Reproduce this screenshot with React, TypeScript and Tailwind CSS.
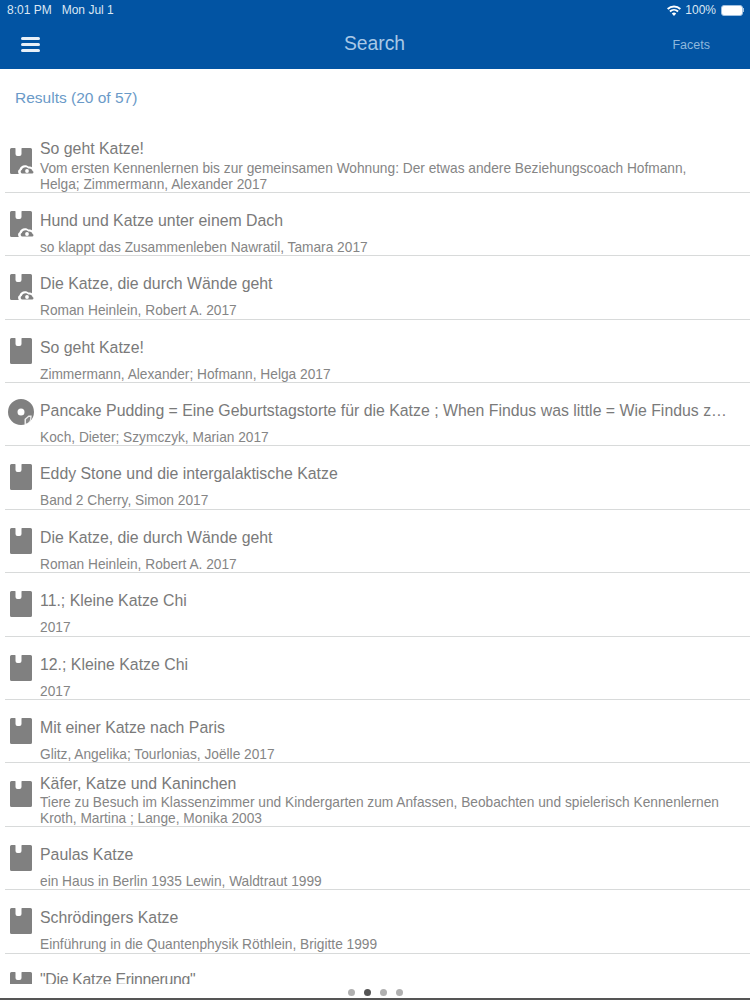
const rows: { t: string; s: string[]; icon: "cloud" | "book" | "disc" | "plain"; two?: "first" | "late" }[] = [
  { t: "So geht Katze!", s: ["Vom ersten Kennenlernen bis zur gemeinsamen Wohnung: Der etwas andere Beziehungscoach Hofmann,", "Helga; Zimmermann, Alexander 2017"], icon: "cloud", two: "first" },
  { t: "Hund und Katze unter einem Dach", s: ["so klappt das Zusammenleben Nawratil, Tamara 2017"], icon: "cloud" },
  { t: "Die Katze, die durch Wände geht", s: ["Roman Heinlein, Robert A. 2017"], icon: "cloud" },
  { t: "So geht Katze!", s: ["Zimmermann, Alexander; Hofmann, Helga 2017"], icon: "book" },
  { t: "Pancake Pudding = Eine Geburtstagstorte für die Katze ; When Findus was little = Wie Findus zu Pettersson kam", s: ["Koch, Dieter; Szymczyk, Marian 2017"], icon: "disc" },
  { t: "Eddy Stone und die intergalaktische Katze", s: ["Band 2 Cherry, Simon 2017"], icon: "book" },
  { t: "Die Katze, die durch Wände geht", s: ["Roman Heinlein, Robert A. 2017"], icon: "book" },
  { t: "11.; Kleine Katze Chi", s: ["2017"], icon: "book" },
  { t: "12.; Kleine Katze Chi", s: ["2017"], icon: "book" },
  { t: "Mit einer Katze nach Paris", s: ["Glitz, Angelika; Tourlonias, Joëlle 2017"], icon: "book" },
  { t: "Käfer, Katze und Kaninchen", s: ["Tiere zu Besuch im Klassenzimmer und Kindergarten zum Anfassen, Beobachten und spielerisch Kennenlernen", "Kroth, Martina ; Lange, Monika 2003"], icon: "book", two: "late" },
  { t: "Paulas Katze", s: ["ein Haus in Berlin 1935 Lewin, Waldtraut 1999"], icon: "book" },
  { t: "Schrödingers Katze", s: ["Einführung in die Quantenphysik Röthlein, Brigitte 1999"], icon: "book" },
];

function Icon({ kind }: { kind: string }) {
  if (kind === "disc") {
    return (
      <svg width="28" height="28" viewBox="0 0 28 28" className="-ml-[1px] -mt-[1px] block">
        <path fill="#808080" fillRule="evenodd" d="M13 0a13 13 0 1 0 0 26 13 13 0 0 0 0-26Zm0 9.500a3.500 3.500 0 1 1 0 7 3.500 3.500 0 0 1 0-7Z" />
        <path fill="#fff" opacity="0.85" d="M16.500 25.500V20l4-3.500h3.200l-.2 2.500-.8 3-2.500 2.500-2.500 1.500Z" />
        <path fill="#8a8a8a" d="M18 24.500V20.500l2.800-2.500h1.400v2l-.6 2-2 2Z" />
      </svg>
    );
  }
  return (
    <svg width="26" height="28" viewBox="0 0 26 28" className="block">
      <path fill="#808080" d="M2.500 1H6a.5.5 0 0 1 .5.5V7Q6.500 9 8.500 9h2q2 0 2-2V1.500A.5.5 0 0 1 13 1h8.500A1.500 1.500 0 0 1 23 2.500v23a1.500 1.500 0 0 1-1.500 1.500h-19A1.500 1.500 0 0 1 1 25.500v-23A1.500 1.500 0 0 1 2.500 1Z" />
      {kind === "cloud" && (
        <>
          <path fill="#fff" d="M12 27.800c-3 0-4-4.200-1.500-5.600.5-3.600 6-5.600 9-2.600 2.500-.6 4.800.8 5.200 3 1.800.8 1.300 5.200-1 5.200Z" />
          <path fill="#808080" d="M13.500 26.500c-2 0-2.500-2.800-.7-3.500.4-2.700 4.500-4 6.500-1.500 2-.5 4 .6 4.200 2.500 1.400.3 1.300 2.500-.3 2.500Z" />
          <circle cx="18" cy="24" r="1.900" fill="#fff" />
        </>
      )}
    </svg>
  );
}

function Row({ r }: { r: (typeof rows)[number] }) {
  return (
    <div className="relative flex h-[63.4px] shrink-0 pl-[9px] pr-[20px]">
      <div className="w-[31px] shrink-0 pt-[17px]">
        <Icon kind={r.icon} />
      </div>
      {r.two ? (
        <div className={r.two === "first" ? "min-w-0 flex-1 pt-[9px]" : "min-w-0 flex-1 pt-[11px]"}>
          <div className="truncate text-[15.850px] leading-[20px] text-[#7a7a7a]">{r.t}</div>
          <div className={r.two === "first" ? "mt-[1px] whitespace-nowrap text-[13.730px] leading-[17px] text-[#858585]" : "whitespace-nowrap text-[13.730px] leading-[17px] text-[#858585]"}>{r.s[0]}</div>
          <div className="whitespace-nowrap text-[13.730px] leading-[16px] text-[#858585]">{r.s[1]}</div>
        </div>
      ) : (
        <div className="min-w-0 flex-1 pt-[18px]">
          <div className="truncate text-[15.850px] leading-[20px] text-[#7a7a7a]">{r.t}</div>
          <div className="mt-[9px] whitespace-nowrap text-[13.730px] leading-[16.500px] text-[#858585]">{r.s[0]}</div>
        </div>
      )}
      <div className="absolute bottom-0 left-[5px] right-0 h-px bg-[#d8dada]" />
    </div>
  );
}

export default function App() {
  return (
    <div className="relative flex h-[1000px] w-[750px] flex-col overflow-hidden bg-white font-['Liberation_Sans',sans-serif] font-light">
      <div className="h-[69px] shrink-0 bg-[#0254a3]">
        <div className="flex h-[20px] items-center justify-between pl-[7px] pr-[6px] text-[12px] text-[#dbe7f3]">
          <div className="flex gap-[10px]">
            <span>8:01 PM</span>
            <span>Mon Jul 1</span>
          </div>
          <div className="flex items-center gap-[4px]">
            <svg width="14" height="11" viewBox="0 0 14 11">
              <path fill="#fff" d="M7 11 4.800 8.500a3.200 3.200 0 0 1 4.400 0ZM3.600 7.200 2.300 5.800a6.900 6.900 0 0 1 9.400 0l-1.300 1.400a5 5 0 0 0-6.800 0ZM1.300 4.700 0 3.300a10.200 10.200 0 0 1 14 0l-1.300 1.400a8.300 8.300 0 0 0-11.400 0Z" />
            </svg>
            <span>100%</span>
            <div className="ml-[1px] flex items-center">
              <div className="h-[11px] w-[22px] rounded-[3px] border border-[#9fc0e0] bg-white" />
              <div className="h-[4px] w-px bg-[#9fc0e0]" />
            </div>
          </div>
        </div>
        <div className="grid h-[49px] grid-cols-[1fr_auto_1fr] items-center pl-[21px] pr-[40px]">
          <div className="flex w-[19px] flex-col gap-[3px]">
            <div className="h-[3px] rounded-full bg-[#e8f0f8]" />
            <div className="h-[3px] rounded-full bg-[#e8f0f8]" />
            <div className="h-[3px] rounded-full bg-[#e8f0f8]" />
          </div>
          <div className="pl-[18px] text-[19.300px] text-[#a9c8e6]">Search</div>
          <div className="pt-[2px] text-right text-[12.500px] text-[#8fb8dd]">Facets</div>
        </div>
      </div>
      <div className="h-[60.500px] shrink-0 pl-[15px] pt-[20px] text-[15.500px] leading-[18px] text-[#6a9ac8]">Results (20 of 57)</div>
      {rows.map((r, i) => (
        <Row key={i} r={r} />
      ))}
      <div className="relative flex h-[30px] overflow-hidden pl-[9px]">
        <div className="w-[31px] shrink-0 pt-[17px]">
          <Icon kind="plain" />
        </div>
        <div className="pt-[16px] text-[15.850px] leading-[20px] tracking-[-0.3px] text-[#7a7a7a]">"Die Katze Erinnerung"</div>
      </div>
      <div className="absolute bottom-[4px] left-[348px] flex gap-[9px]">
        <div className="h-[7px] w-[7px] rounded-full bg-[#b0b0b0]" />
        <div className="h-[7px] w-[7px] rounded-full bg-[#555]" />
        <div className="h-[7px] w-[7px] rounded-full bg-[#b0b0b0]" />
        <div className="h-[7px] w-[7px] rounded-full bg-[#b0b0b0]" />
      </div>
      <div className="absolute bottom-0 left-0 right-0 h-[2px] bg-[#555]" />
    </div>
  );
}
